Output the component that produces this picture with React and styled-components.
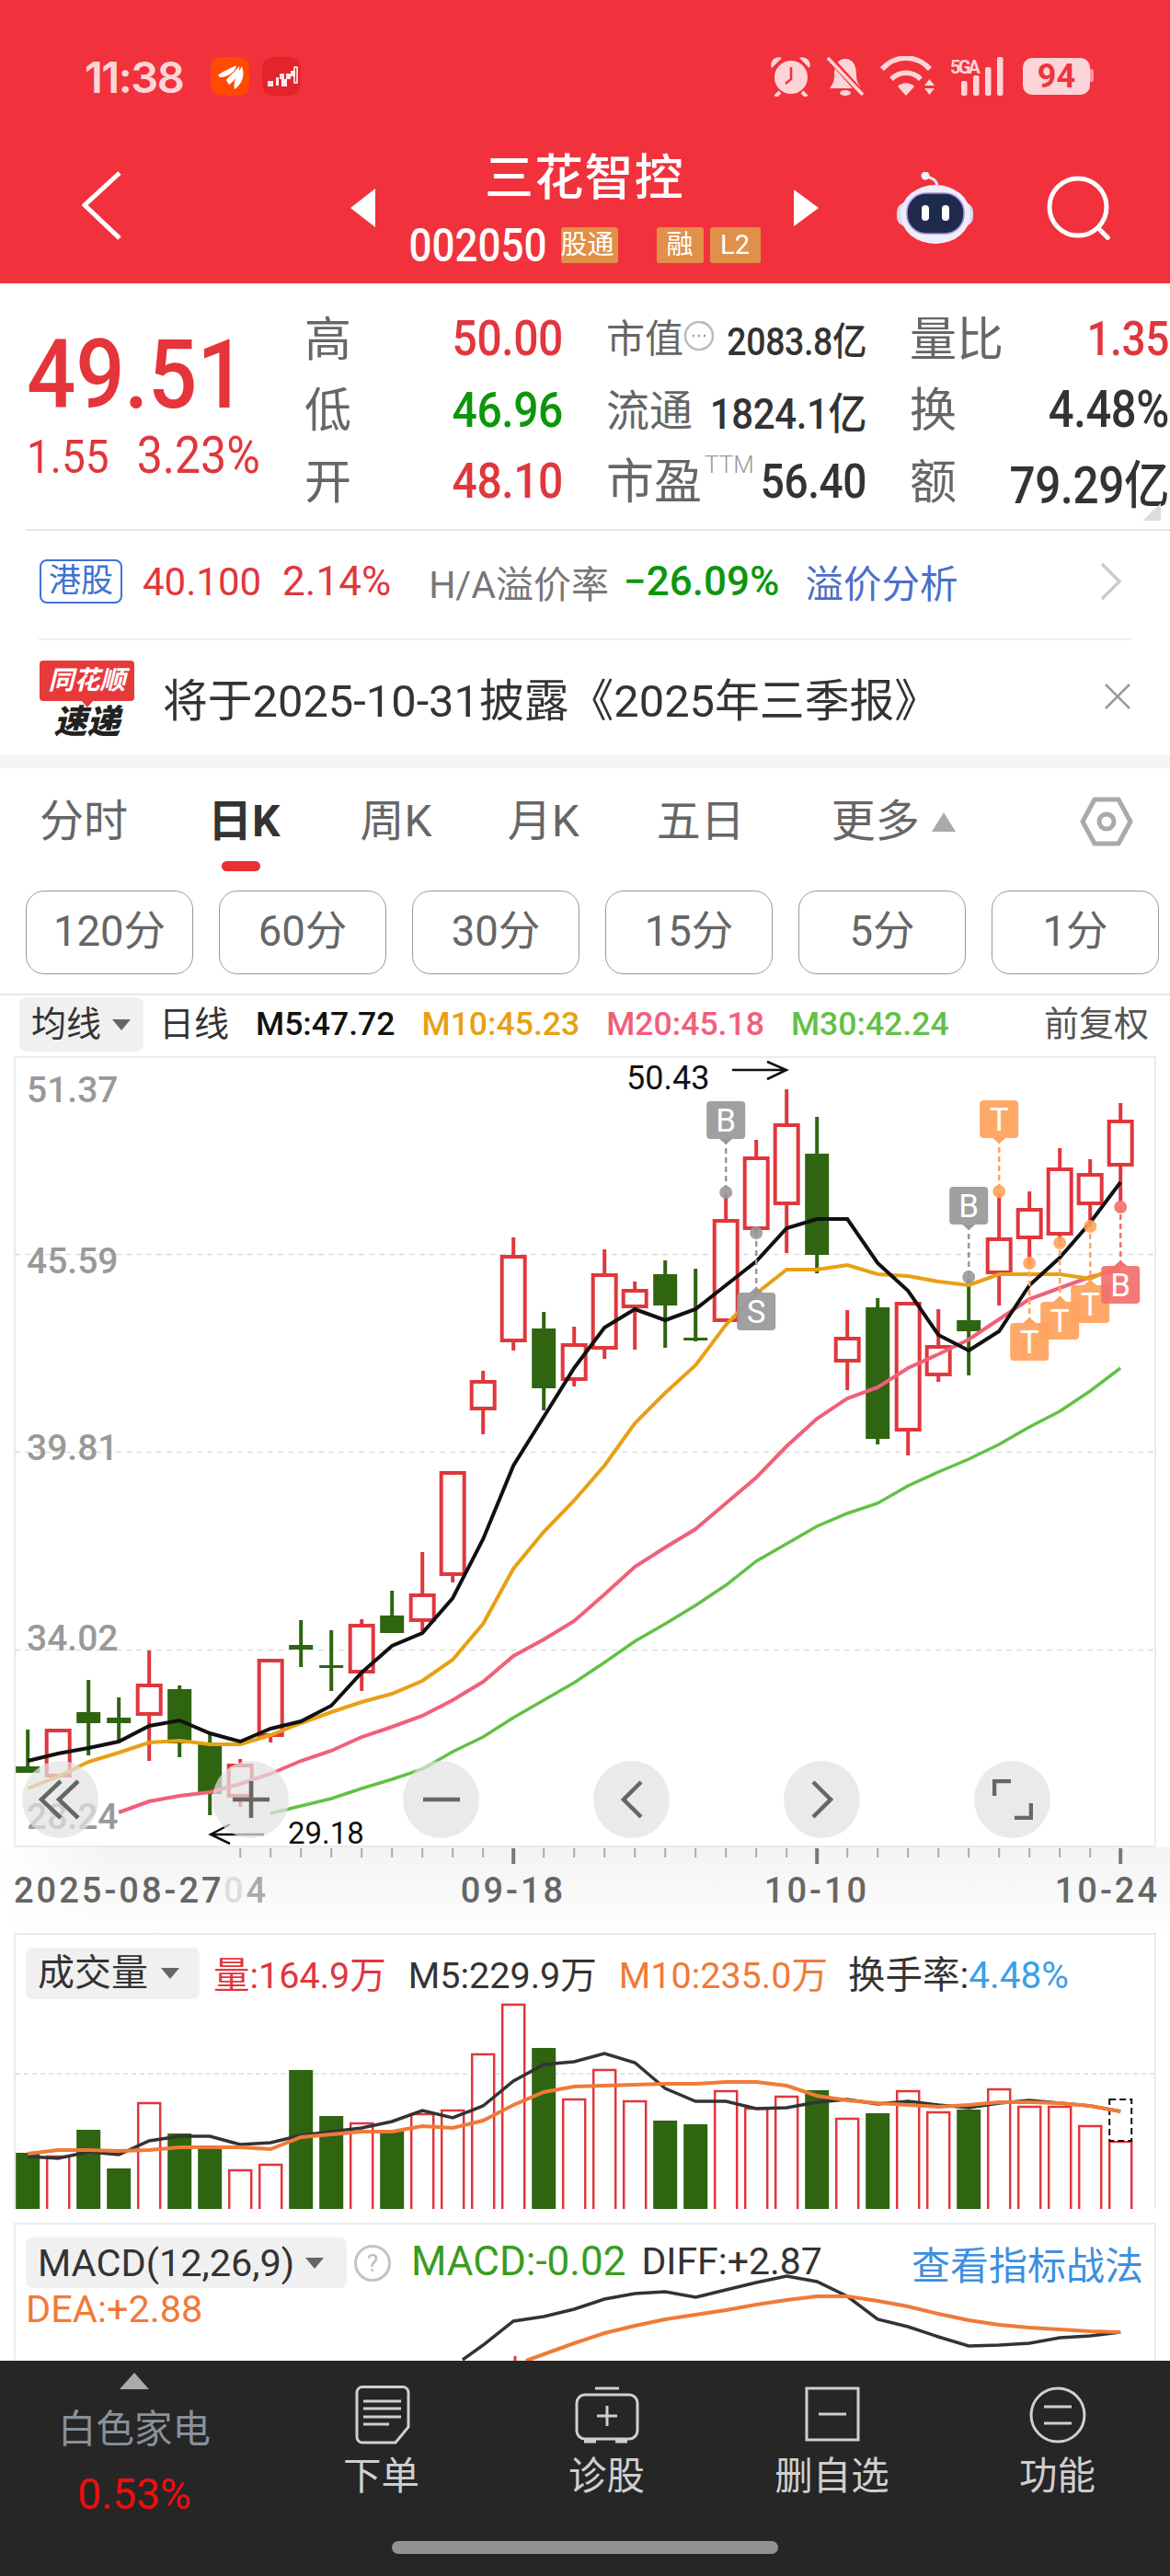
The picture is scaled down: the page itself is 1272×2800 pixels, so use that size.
import styled, { createGlobalStyle } from "styled-components";

const UP = "#e0373d";
const DOWN = "#2f6410";
const FONT = `Roboto, "Noto Sans CJK SC", sans-serif`;

// [kind, wickTop, bodyTop, bodyBottom, wickBottom] in page pixels
const candles = [
  ["g", 1879, 1919, 1926, 1926], ["r", 1878, 1878, 1931, 1931], ["g", 1825, 1860, 1872, 1907],
  ["g", 1844, 1866, 1872, 1892], ["r", 1793, 1829, 1864, 1913], ["g", 1831, 1835, 1894, 1909],
  ["g", 1883, 1895, 1949, 1972], ["r", 1911, 1916, 1953, 1963], ["r", 1802, 1802, 1887, 1893],
  ["g", 1760, 1787, 1792, 1811], ["g", 1771, 1809, 1812, 1837], ["r", 1759, 1764, 1818, 1837],
  ["g", 1728, 1755, 1774, 1774], ["r", 1686, 1731, 1762, 1772], ["r", 1598, 1598, 1712, 1719],
  ["r", 1489, 1499, 1532, 1558], ["r", 1344, 1363, 1458, 1467], ["g", 1425, 1443, 1508, 1532],
  ["r", 1441, 1459, 1500, 1506], ["r", 1357, 1383, 1466, 1476], ["r", 1392, 1400, 1421, 1466],
  ["g", 1369, 1384, 1418, 1464], ["g", 1378, 1453, 1456, 1457], ["r", 1296, 1324, 1436, 1436],
  ["r", 1238, 1256, 1336, 1341], ["r", 1183, 1220, 1309, 1361], ["g", 1213, 1253, 1363, 1383],
  ["r", 1423, 1452, 1480, 1510], ["g", 1410, 1420, 1563, 1569], ["r", 1414, 1414, 1555, 1581],
  ["r", 1422, 1461, 1495, 1501], ["g", 1389, 1434, 1446, 1494], ["r", 1296, 1344, 1384, 1418],
  ["r", 1294, 1312, 1346, 1374], ["r", 1247, 1268, 1342, 1349], ["r", 1259, 1274, 1309, 1333],
  ["r", 1198, 1216, 1267, 1305],
];

const m5 = [1913, 1905, 1899, 1892, 1875, 1869, 1883, 1892, 1878, 1870, 1853, 1817, 1788, 1774, 1736, 1672, 1592, 1539, 1486, 1442, 1422, 1434, 1422, 1396, 1370, 1334, 1324, 1324, 1372, 1402, 1450, 1467, 1446, 1396, 1366, 1328, 1284];
const m10 = [1943, 1930, 1914, 1904, 1893, 1891, 1895, 1895, 1885, 1872, 1860, 1849, 1840, 1826, 1803, 1764, 1704, 1664, 1630, 1592, 1546, 1513, 1483, 1439, 1405, 1379, 1379, 1374, 1384, 1386, 1392, 1396, 1384, 1384, 1384, 1389, 1374];
const m20 = [1969, 1957, 1951, 1947, 1938, 1927, 1913, 1902, 1887, 1876, 1864, 1847, 1827, 1799, 1781, 1761, 1732, 1702, 1681, 1661, 1633, 1605, 1571, 1541, 1519, 1507, 1486, 1471, 1455, 1433, 1411, 1399, 1387, 1379];
const m30 = [1970, 1962, 1954, 1943, 1933, 1922, 1903, 1887, 1866, 1847, 1828, 1806, 1783, 1764, 1744, 1722, 1696, 1677, 1658, 1644, 1633, 1614, 1599, 1585, 1569, 1550, 1533, 1511, 1486];

const volumes = [2335, 2338, 2310, 2352, 2280, 2314, 2330, 2353, 2347, 2245, 2295, 2302, 2310, 2292, 2288, 2227, 2173, 2221, 2276, 2244, 2278, 2300, 2304, 2267, 2286, 2273, 2267, 2297, 2292, 2267, 2290, 2288, 2265, 2284, 2284, 2305, 2322];
const volM5 = [2339, 2341, 2334, 2337, 2322, 2317, 2317, 2326, 2324, 2316, 2312, 2308, 2301, 2289, 2297, 2284, 2257, 2239, 2236, 2227, 2237, 2265, 2279, 2279, 2287, 2286, 2280, 2277, 2282, 2279, 2283, 2286, 2281, 2278, 2281, 2284, 2290];
const volM10 = [2336, 2332, 2332, 2333, 2332, 2329, 2329, 2329, 2331, 2318, 2315, 2312, 2312, 2306, 2308, 2300, 2283, 2269, 2263, 2262, 2261, 2260, 2260, 2258, 2258, 2262, 2273, 2278, 2281, 2283, 2285, 2283, 2280, 2280, 2281, 2284, 2290];
const diff = [2548, 2522, 2517, 2509, 2498, 2492, 2490, 2496, 2488, 2480, 2473, 2479, 2495, 2520, 2528, 2539, 2549, 2548, 2546, 2540, 2538, 2534];
const dea = [2546, 2535, 2527, 2520, 2515, 2510, 2504, 2499, 2495, 2495, 2500, 2506, 2514, 2521, 2526, 2529, 2531, 2533, 2534];

// letter, candle index, box top, dot y, colour
const markers = [
  ["B", 23, 1196, 1295, "#999999"], ["S", 24, 1404, 1339, "#999999"], ["B", 31, 1289, 1387, "#999999"],
  ["T", 32, 1195, 1294, "#ffa35c"], ["T", 33, 1437, 1372, "#ffa35c"], ["T", 34, 1414, 1350, "#ffa35c"],
  ["T", 35, 1396, 1332, "#ffa35c"], ["B", 36, 1375, 1311, "#f36f6f"],
];

const candleX = (i) => 30.2 + 33 * i;
const toPoints = (list, start = 0) => list.map((y, i) => `${candleX(i + start)},${y}`).join(" ");

const GlobalStyle = createGlobalStyle`
  html, body { margin: 0; padding: 0; background: #fff; }
  * { box-sizing: border-box; }
  svg { display: block; }
`;

const Page = styled.div`
  width: 1272px;
  height: 2800px;
  overflow: hidden;
  display: flex;
  flex-direction: column;
  font-family: ${FONT};
  background: #fff;
`;

/* ---------- red top ---------- */
const Top = styled.header`
  height: 308px;
  background: #f1323c;
  color: #fff;
`;
const StatusRow = styled.div`
  height: 166px;
  padding: 0 87px 0 92px;
  display: flex;
  align-items: center;
`;
const Time = styled.span`
  font-family: Inter, Roboto, sans-serif;
  font-size: 47px;
  font-weight: 600;
  letter-spacing: -1.5px;
  color: #fdd5d8;
  margin-right: 30px;
`;
const AppIcon = styled.span`
  width: 42px;
  height: 42px;
  border-radius: 12px;
  background: ${(p) => p.$bg};
  margin-right: 14px;
`;
const StatusIcons = styled.div`
  margin-left: auto;
  display: flex;
  align-items: center;
  gap: 18px;
`;
const Battery = styled.span`
  position: relative;
  width: 73px;
  height: 40px;
  margin-left: 3px;
  border-radius: 10px;
  background: #fdd5d8;
  color: #ee3540;
  font-size: 36px;
  font-weight: 700;
  line-height: 40px;
  text-align: center;
  &::after {
    content: "";
    position: absolute;
    right: -4px;
    top: 12px;
    width: 4px;
    height: 14px;
    border-radius: 0 3px 3px 0;
    background: #f79aa0;
  }
`;
const NavRow = styled.div`
  height: 142px;
  padding-bottom: 24px;
  display: grid;
  grid-template-columns: 381px 27px 455px 27px 1fr;
  align-items: center;
`;
const BackCell = styled.div`
  padding: 0 0 4px 89px;
`;
const Centre = styled.div`
  display: flex;
  flex-direction: column;
  align-items: center;
`;
const Title = styled.div`
  margin-top: 3px;
  font-size: 53px;
  line-height: 50px;
  font-weight: 500;
  letter-spacing: 1.2px;
`;
const CodeRow = styled.div`
  margin-top: 28px;
  height: 39px;
  display: flex;
  align-items: center;
`;
const Code = styled.span`
  font-size: 44px;
  letter-spacing: 0;
  font-weight: 500;
  display: inline-block;
  transform: scaleY(1.14);
  margin-right: 15px;
`;
const Tag = styled.span`
  height: 39px;
  width: ${(p) => p.$w}px;
  margin-left: ${(p) => p.$ml || 0}px;
  background: #e09048;
  border-radius: 3px;
  font-size: 29px;
  line-height: 39px;
  text-align: center;
  overflow: hidden;
  white-space: nowrap;
`;
const ClippedText = styled.span`
  display: block;
  margin-left: -4px;
`;
const NavActions = styled.div`
  padding-left: 85px;
  display: flex;
  align-items: center;
  gap: 79px;
`;

/* ---------- quote ---------- */
const Quote = styled.section`
  height: 267px;
  padding: 21px 0 0 29px;
  display: flex;
  position: relative;
`;
const PriceCol = styled.div`
  width: 302px;
`;
const Price = styled.div`
  margin-top: 28px;
  height: 100px;
  font-size: 94px;
  font-weight: 500;
  line-height: 100px;
  color: #e5343a;
  transform: scaleY(1.11);
  letter-spacing: -0.3px;
`;
const Change = styled.div`
  margin-top: 18px;
  height: 40px;
  display: flex;
  align-items: baseline;
  gap: 30px;
  color: ${UP};
  font-size: 46px;
  line-height: 40px;
  transform: scaleY(1.1);
`;
const ChangePct = styled.span`
  font-size: 50px;
`;
const Stats = styled.div`
  display: grid;
  grid-template-columns: 281px 283px 282px;
  grid-auto-rows: 77.5px;
  column-gap: 47px;
`;
const Stat = styled.div`
  display: flex;
  justify-content: space-between;
  align-items: center;
  white-space: nowrap;
`;
const Label = styled.span`
  display: flex;
  align-items: center;
  margin-bottom: 6px;
  font-size: ${(p) => p.$size || 51}px;
  color: #666;
`;
const Num = styled.span`
  display: inline-block;
  font-size: ${(p) => p.$size || 48}px;
  font-weight: 500;
  color: ${(p) => p.$color || "#333"};
  transform: scaleY(1.12);
  letter-spacing: -0.4px;
`;
const Ttm = styled.span`
  align-self: flex-start;
  margin: 8px 0 0 3px;
  font-size: 26px;
  font-weight: 300;
  color: #999;
`;
const Corner = styled.span`
  position: absolute;
  right: 10px;
  bottom: 9px;
  width: 0;
  height: 0;
  border-left: 20px solid transparent;
  border-bottom: 19px solid #ddd;
`;
const Divider = styled.div`
  height: ${(p) => p.$h || 2}px;
  background: ${(p) => p.$color || "#e6e6e6"};
  margin: 0 ${(p) => p.$right || 0}px 0 ${(p) => p.$left || 0}px;
  flex: none;
`;
const HkRow = styled.div`
  height: 117px;
  padding: 0 52px 7px 43px;
  display: flex;
  align-items: center;
  white-space: nowrap;
`;
const HkTag = styled.span`
  width: 90px;
  height: 48px;
  border: 2px solid #3f72d4;
  border-radius: 8px;
  color: #3f72d4;
  font-size: 35px;
  line-height: 43px;
  text-align: center;
`;
const HkText = styled.span`
  font-size: ${(p) => p.$size}px;
  font-weight: ${(p) => p.$weight || 400};
  color: ${(p) => p.$color};
  margin-left: ${(p) => p.$ml}px;
`;
const PushRight = styled.span`
  margin-left: auto;
`;
const NewsRow = styled.div`
  height: 125px;
  padding: 0 42px 3px 43px;
  display: flex;
  align-items: center;
`;
const Logo = styled.div`
  width: 103px;
  margin: 5px 31px 0 0;
  display: flex;
  flex-direction: column;
  align-items: center;
`;
const LogoTop = styled.div`
  position: relative;
  width: 103px;
  height: 44px;
  border-radius: 4px;
  background: #e63a3a;
  color: #fff;
  font-size: 28px;
  font-weight: 700;
  font-style: italic;
  line-height: 44px;
  text-align: center;
  &::after {
    content: "";
    position: absolute;
    left: 46px;
    top: 44px;
    border-left: 6px solid transparent;
    border-right: 6px solid transparent;
    border-top: 7px solid #e63a3a;
  }
`;
const LogoBottom = styled.div`
  margin-top: 7px;
  color: #222;
  font-size: 36px;
  font-weight: 900;
  font-style: italic;
  line-height: 32px;
`;
const NewsText = styled.span`
  font-size: 48.8px;
  color: #333;
  white-space: nowrap;
`;
const Band = styled.div`
  height: 14px;
  flex: none;
  background: #f5f5f5;
`;

/* ---------- tabs ---------- */
const Tabs = styled.nav`
  height: 116px;
  padding: 0 40px 0 43px;
  display: flex;
  align-items: center;
  white-space: nowrap;
`;
const Tab = styled.span`
  position: relative;
  margin-left: ${(p) => p.$ml || 0}px;
  font-size: 48px;
  line-height: 58px;
  font-weight: ${(p) => (p.$active ? 700 : 400)};
  color: ${(p) => (p.$active ? "#333" : "#666")};
  display: flex;
  align-items: center;
  ${(p) =>
    p.$active &&
    `&::after {
      content: "";
      position: absolute;
      left: 15px;
      top: 72px;
      width: 42px;
      height: 11px;
      border-radius: 6px;
      background: #e83035;
    }`}
`;
const TabCaret = styled.span`
  margin-left: 13px;
  width: 0;
  height: 0;
  border-left: 13px solid transparent;
  border-right: 13px solid transparent;
  border-bottom: 21px solid #aaa;
`;
const Periods = styled.div`
  padding: 17px 12px 21px 28px;
  display: flex;
  gap: 28px;
`;
const Period = styled.span`
  width: 182px;
  height: 91px;
  border: 1.5px solid #999;
  border-radius: 20px;
  font-size: 45.5px;
  line-height: 88px;
  text-align: center;
  color: #666;
`;

/* ---------- MA legend ---------- */
const MaRow = styled.div`
  height: 66px;
  padding: 0 23px 3px 21px;
  display: flex;
  align-items: center;
  white-space: nowrap;
`;
const Picker = styled.span`
  height: ${(p) => p.$h || 59}px;
  width: ${(p) => p.$w}px;
  flex: none;
  border-radius: 8px;
  background: #f0f0f0;
  padding-left: 13px;
  display: flex;
  align-items: center;
  font-size: ${(p) => p.$size || 38}px;
  line-height: 1.2;
  color: #333;
`;
const PickerCaret = styled.span`
  margin-left: ${(p) => p.$ml || 12}px;
  width: 0;
  height: 0;
  border-left: 10px solid transparent;
  border-right: 10px solid transparent;
  border-top: 12px solid #666;
`;
const Legend = styled.span`
  font-size: ${(p) => p.$size || 35.6}px;
  font-weight: ${(p) => p.$weight || 500};
  line-height: 1.3;
  color: ${(p) => p.$color};
  margin-left: ${(p) => p.$ml}px;
`;

/* ---------- charts ---------- */
const ChartFrame = styled.div`
  position: relative;
  flex: none;
  width: 1242px;
  height: 860px;
  margin-left: 15px;
`;
const Controls = styled.div`
  position: absolute;
  left: 9px;
  bottom: 10px;
  display: flex;
  gap: 124px;
`;
const ControlButton = styled.span`
  width: 83px;
  height: 84px;
  border-radius: 50%;
  background: rgba(226, 226, 226, 0.72);
  display: flex;
  align-items: center;
  justify-content: center;
`;
const AxisStrip = styled.div`
  height: 93px;
  flex: none;
  background: linear-gradient(90deg, #fff 0, rgba(255, 255, 255, 0) 120px), linear-gradient(#f3f3f3, #fefefe);
`;
const Panel = styled.section`
  position: relative;
  flex: none;
  width: 1242px;
  height: ${(p) => p.$h}px;
  margin: 0 0 ${(p) => p.$mb || 0}px 15px;
  border: 2px solid #ebebeb;
  border-bottom: 0;
  overflow: hidden;
`;
const PanelHeader = styled.div`
  position: relative;
  margin: 11px 12px 0 11px;
  display: flex;
  align-items: center;
  white-space: nowrap;
`;
const PanelText = styled.span`
  margin-bottom: 3px;
  font-size: ${(p) => p.$size || 39.5}px;
  color: ${(p) => p.$color};
  margin-left: ${(p) => p.$ml}px;
`;
const Dea = styled.div`
  position: relative;
  margin: 0 0 0 11px;
  font-size: 41.5px;
  line-height: 40px;
  color: #f07a38;
`;
const PanelBackground = styled.svg`
  position: absolute;
  left: 0;
  top: 0;
`;
const QuestionMark = styled.span`
  width: 40px;
  height: 40px;
  margin-left: 8px;
  flex: none;
  border: 3px solid #c4c4c4;
  border-radius: 50%;
  color: #bbb;
  font-size: 26px;
  line-height: 34px;
  text-align: center;
`;

/* ---------- footer ---------- */
const Footer = styled.footer`
  flex: 1;
  background: #262626;
  display: flex;
  flex-direction: column;
`;
const FooterRow = styled.div`
  height: 196px;
  display: grid;
  grid-template-columns: 292px repeat(4, 245px);
`;
const Sector = styled.div`
  padding-top: 13px;
  display: flex;
  flex-direction: column;
  align-items: center;
`;
const SectorCaret = styled.span`
  width: 0;
  height: 0;
  border-left: 16px solid transparent;
  border-right: 16px solid transparent;
  border-bottom: 18px solid #aaa;
`;
const SectorName = styled.span`
  margin-top: 19px;
  font-size: 41.5px;
  line-height: 50px;
  color: #8a9099;
`;
const SectorChange = styled.span`
  margin-top: 20px;
  font-size: 46px;
  line-height: 50px;
  color: #f00d0d;
`;
const Action = styled.div`
  padding-top: 27px;
  display: flex;
  flex-direction: column;
  align-items: center;
  color: #cfcfcf;
`;
const ActionIcon = styled.svg`
  height: 64px;
  width: 70px;
`;
const ActionLabel = styled.span`
  margin-top: 10px;
  font-size: 41.5px;
  line-height: 50px;
`;
const HomeBar = styled.div`
  width: 420px;
  height: 14px;
  align-self: center;
  border-radius: 7px;
  background: #919191;
`;

const Marker = ({ letter, index, top, dot, color }) => {
  const x = candleX(index);
  const below = dot < top;
  const edge = below ? top : top + 41;
  const tail = below ? top - 6 : top + 47;
  return (
    <g>
      <line x1={x} x2={x} y1={edge} y2={dot} stroke={color} strokeWidth="2.5" strokeDasharray="6 4" />
      <circle cx={x} cy={dot} r="7" fill={color} opacity="0.9" />
      <rect x={x - 21} y={top} width="42" height="41" rx="4" fill={color} opacity="0.93" />
      <polygon points={`${x - 7},${edge} ${x + 7},${edge} ${x},${tail}`} fill={color} />
      <text x={x} y={top + 33} textAnchor="middle" fontSize="35" fontFamily="Roboto, sans-serif" fill="#fff">
        {letter}
      </text>
    </g>
  );
};

function CandleChart() {
  return (
    <svg width="1242" height="860" viewBox="15 1147 1242 860">
      <rect x="16" y="1148" width="1240" height="858" fill="none" stroke="#ebebeb" strokeWidth="2" />
      {[1362.5, 1577.5, 1792.5].map((y) => (
        <line key={y} x1="16" x2="1256" y1={y} y2={y} stroke="#ddd" strokeWidth="1.5" strokeDasharray="6 5" />
      ))}
      {[["51.37", 1197], ["45.59", 1383], ["39.81", 1586], ["34.02", 1793], ["28.24", 1987]].map(([t, y]) => (
        <text key={t} x="29" y={y} fontSize="39" fontWeight="500" fontFamily="Roboto, sans-serif" fill="#999">
          {t}
        </text>
      ))}
      {candles.map(([kind, wickTop, bodyTop, bodyBottom, wickBottom], i) => {
        const x = candleX(i);
        const color = kind === "r" ? UP : DOWN;
        return (
          <g key={i}>
            <line x1={x} x2={x} y1={wickTop} y2={wickBottom} stroke={color} strokeWidth="4" />
            {kind === "r" ? (
              <rect x={x - 12.5} y={bodyTop + 2} width="25" height={bodyBottom - bodyTop - 4} fill="#fff" stroke={color} strokeWidth="4" />
            ) : (
              <rect x={x - 13} y={bodyTop} width="26" height={bodyBottom - bodyTop} fill={color} />
            )}
          </g>
        );
      })}
      <polyline points={toPoints(m30, 8)} fill="none" stroke="#62c146" strokeWidth="3.5" />
      <polyline points={toPoints(m20, 3)} fill="none" stroke="#f0607a" strokeWidth="4" />
      <polyline points={toPoints(m10)} fill="none" stroke="#e8a013" strokeWidth="4" />
      <polyline points={toPoints(m5)} fill="none" stroke="#111" strokeWidth="4" />
      {markers.map(([letter, index, top, dot, color]) => (
        <Marker key={index} letter={letter} index={index} top={top} dot={dot} color={color} />
      ))}
      <text x="681" y="1183" fontSize="36" fontFamily="Roboto, sans-serif" fill="#111">50.43</text>
      <path d="M796 1162H855M834 1153L855 1162L834 1172" fill="none" stroke="#111" strokeWidth="2.5" />
      <text x="313" y="2003" fontSize="33" fontFamily="Roboto, sans-serif" fill="#111">29.18</text>
      <path d="M287 1993H229M250 1982L229 1993L250 2003" fill="none" stroke="#111" strokeWidth="2.5" />
    </svg>
  );
}

function AxisTicks() {
  const text = { fontSize: 38, fontWeight: 500, fontFamily: "Roboto, sans-serif", letterSpacing: 3 };
  return (
    <svg width="1272" height="93" viewBox="0 2007 1272 93">
      {candles.map((_, i) => {
        if (i < 7) return null;
        const major = i === 16 || i === 26 || i === 36;
        const x = candleX(i);
        return <line key={i} x1={x} x2={x} y1="2008" y2={major ? 2025 : 2018} stroke={major ? "#777" : "#aaa"} strokeWidth={major ? 4 : 2} />;
      })}
      <text x="15" y="2067" fill="#666" {...text}>2025-08-27</text>
      <text x="243" y="2067" fill="#ddd" {...text}>0<tspan fill="#aaa">4</tspan></text>
      <text x="558" y="2067" textAnchor="middle" fill="#666" {...text}>09-18</text>
      <text x="888" y="2067" textAnchor="middle" fill="#666" {...text}>10-10</text>
      <text x="1261" y="2067" textAnchor="end" fill="#666" {...text}>10-24</text>
    </svg>
  );
}

function VolumeChart() {
  return (
    <svg width="1238" height="229" viewBox="17 2171 1238 229">
      <line x1="17" x2="1255" y1="2249" y2="2249" stroke="#ddd" strokeWidth="1.5" strokeDasharray="5 4" />
      {volumes.map((top, i) => {
        const x = candleX(i);
        return candles[i][0] === "r" ? (
          <rect key={i} x={x - 12} y={top + 1} width="24" height={2398 - top} fill="#fff" stroke={UP} strokeWidth="2.5" />
        ) : (
          <rect key={i} x={x - 13} y={top} width="26" height={2400 - top} fill={DOWN} />
        );
      })}
      <rect x={candleX(36) - 12} y="2277" width="24" height="45" fill="#fff" stroke="#111" strokeWidth="2" strokeDasharray="7 4" />
      <polyline points={toPoints(volM5)} fill="none" stroke="#333" strokeWidth="3.5" />
      <polyline points={toPoints(volM10)} fill="none" stroke="#f07a38" strokeWidth="4" />
    </svg>
  );
}

function MacdLines() {
  return (
    <PanelBackground width="1238" height="148" viewBox="17 2417 1238 148">
      <line x1="560" x2="560" y1="2560" y2="2565" stroke={UP} strokeWidth="3" />
      <polyline points={`503,2564 ${toPoints(diff, 15)}`} fill="none" stroke="#333" strokeWidth="3.5" />
      <polyline points={`572,2565 ${toPoints(dea, 18)}`} fill="none" stroke="#f07a38" strokeWidth="4" />
    </PanelBackground>
  );
}

const Robot = () => (
  <svg width="83" height="78" viewBox="975 183 83 78">
    <path d="M1019 199C1019 192 1014 190 1008 188" fill="none" stroke="#e3e4f5" strokeWidth="3" />
    <circle cx="1006" cy="187" r="4.5" fill="#eef0fa" />
    <rect x="975" y="216" width="83" height="26" rx="10" fill="#d9d9f0" />
    <ellipse cx="1017" cy="229" rx="38" ry="32" fill="#eeeefa" />
    <rect x="986" y="206" width="62" height="44" rx="21" fill="#1f2b4c" stroke="#a78be0" strokeWidth="1.5" />
    <rect x="1002" y="219" width="8" height="17" rx="4" fill="#fff" />
    <rect x="1024" y="219" width="8" height="17" rx="4" fill="#fff" />
  </svg>
);

export default function App() {
  return (
    <Page>
      <GlobalStyle />
      <Top>
        <StatusRow>
          <Time>11:38</Time>
          <AppIcon $bg="#ff4a00">
            <svg width="42" height="42" viewBox="0 0 42 42">
              <path d="M8 20C15 14 23 12 28 9C27 15 21 21 10 22ZM17 25C22 19 27 15 31 10C32 16 29 23 20 30ZM26 35C24 28 28 20 34 10C37 18 36 28 26 35Z" fill="#fff" />
            </svg>
          </AppIcon>
          <AppIcon $bg="#e3242b">
            <svg width="42" height="42" viewBox="0 0 42 42">
              <path d="M6 26h6v6H6zM15 22h3v9h-3zM19 18h5v6h-5zM21 24h6v8h-6zM26 18h5v6h-5zM31 15h5v6h-5z" fill="#fff" opacity="0.9" />
              <rect x="35" y="11" width="3" height="17" fill="none" stroke="#fff" strokeWidth="1.5" />
            </svg>
          </AppIcon>
          <StatusIcons>
            <svg width="43" height="44" viewBox="838 60 43 44" fill="#fdd5d8">
              <path d="M839 73C836 66 843 59 850 62ZM880 73C883 66 876 59 869 62Z" />
              <circle cx="860" cy="83" r="18" />
              <path d="M848 99L843 104M872 99L877 104" stroke="#fdd5d8" strokeWidth="4" />
              <path d="M860 72V85L854 90" fill="none" stroke="#f1323c" strokeWidth="2.5" />
            </svg>
            <svg width="40" height="44" viewBox="900 60 40 44" fill="#fdd5d8">
              <path d="M920 63C929 63 932 71 932 81C932 88 935 91 937 95H903C906 91 908 88 908 81C908 71 911 63 920 63Z" />
              <ellipse cx="920" cy="100" rx="6" ry="3" />
              <line x1="901" y1="60" x2="939" y2="102" stroke="#f1323c" strokeWidth="7" />
              <line x1="901" y1="62" x2="939" y2="102" stroke="#fdd5d8" strokeWidth="3.5" />
            </svg>
            <svg width="59" height="44" viewBox="958 60 59 44" fill="none" stroke="#fdd5d8">
              <path d="M960 74C975 58 997 58 1012 74M970 85C979 76 993 76 1002 85" strokeWidth="5.5" />
              <path d="M977 93C982 88 990 88 995 93L986 103Z" fill="#fdd5d8" strokeWidth="0" />
              <path d="M1006 92H1017L1011.5 85ZM1006 95H1017L1011.5 102Z" fill="#fdd5d8" strokeWidth="0" />
            </svg>
            <svg width="57" height="44" viewBox="1033 60 57 44" fill="#fdd5d8">
              <text x="1032" y="79" fontSize="20" fontWeight="700" fontFamily="Roboto, sans-serif" textLength="33">5GA</text>
              <rect x="1044" y="87" width="6.5" height="16" rx="2" />
              <rect x="1057" y="81" width="6.5" height="22" rx="2" />
              <rect x="1070" y="72" width="6.5" height="31" rx="2" />
              <rect x="1083" y="61" width="6.5" height="42" rx="2" />
            </svg>
            <Battery>94</Battery>
          </StatusIcons>
        </StatusRow>
        <NavRow>
          <BackCell>
            <svg width="46" height="78" viewBox="89 184 46 78">
              <path d="M130 187L92 222L130 258" fill="none" stroke="#fff" strokeWidth="5" />
            </svg>
          </BackCell>
          <svg width="27" height="42" viewBox="0 0 27 42"><polygon points="0,21 27,0 27,42" fill="#fff" /></svg>
          <Centre>
            <Title>三花智控</Title>
            <CodeRow>
              <Code>002050</Code>
              <Tag $w={62}><ClippedText>股通</ClippedText></Tag>
              <Tag $w={51} $ml={42}>融</Tag>
              <Tag $w={55} $ml={7}>L2</Tag>
            </CodeRow>
          </Centre>
          <svg width="27" height="40" viewBox="0 0 27 40"><polygon points="0,0 27,20 0,40" fill="#fff" /></svg>
          <NavActions>
            <Robot />
            <svg width="70" height="70" viewBox="1137 189 70 70" fill="none" stroke="#fff" strokeWidth="5">
              <circle cx="1172" cy="223" r="31" />
              <path d="M1194 246L1206 258" />
            </svg>
          </NavActions>
        </NavRow>
      </Top>

      <Quote>
        <PriceCol>
          <Price>49.51</Price>
          <Change>
            <span>1.55</span>
            <ChangePct>3.23%</ChangePct>
          </Change>
        </PriceCol>
        <Stats>
          <Stat><Label>高</Label><Num $color={UP}>50.00</Num></Stat>
          <Stat>
            <Label $size={42}>
              市值
              <svg width="34" height="34" viewBox="0 0 34 34" fill="none">
                <circle cx="17" cy="17" r="15" stroke="#bbb" strokeWidth="2.5" />
                <path d="M10 17h2M16 17h2M22 17h2" stroke="#999" strokeWidth="2.5" />
              </svg>
            </Label>
            <Num $size={37.5}>2083.8亿</Num>
          </Stat>
          <Stat><Label>量比</Label><Num $color={UP} $size={46}>1.35</Num></Stat>
          <Stat><Label>低</Label><Num $color="#0d960d">46.96</Num></Stat>
          <Stat><Label $size={47}>流通</Label><Num $size={42}>1824.1亿</Num></Stat>
          <Stat><Label>换</Label><Num $size={49}>4.48%</Num></Stat>
          <Stat><Label>开</Label><Num $color={UP}>48.10</Num></Stat>
          <Stat><Label $size={52}>市盈<Ttm>TTM</Ttm></Label><Num $size={46}>56.40</Num></Stat>
          <Stat><Label>额</Label><Num $size={49.5}>79.29亿</Num></Stat>
        </Stats>
        <Corner />
      </Quote>
      <Divider $left={28} />
      <HkRow>
        <HkTag>港股</HkTag>
        <HkText $size={42} $color={UP} $ml={22}>40.100</HkText>
        <HkText $size={44} $color={UP} $ml={23}>2.14%</HkText>
        <HkText $size={41} $color="#777" $ml={41}>H/A溢价率</HkText>
        <HkText $size={44} $weight={500} $color="#0d960d" $ml={16}>−26.09%</HkText>
        <HkText $size={41.5} $color="#4a6fc8" $ml={28}>溢价分析</HkText>
        <PushRight>
          <svg width="24" height="42" viewBox="0 0 24 42">
            <path d="M2 2L21 21L2 40" fill="none" stroke="#ccc" strokeWidth="3.5" />
          </svg>
        </PushRight>
      </HkRow>
      <Divider $left={42} $right={43} $color="#eeeeee" />
      <NewsRow>
        <Logo>
          <LogoTop>同花顺</LogoTop>
          <LogoBottom>速递</LogoBottom>
        </Logo>
        <NewsText>将于2025-10-31披露《2025年三季报》</NewsText>
        <PushRight>
          <svg width="30" height="28" viewBox="0 0 30 28">
            <path d="M2 1L28 27M28 1L2 27" fill="none" stroke="#999" strokeWidth="2.5" />
          </svg>
        </PushRight>
      </NewsRow>
      <Band />

      <Tabs>
        <Tab>分时</Tab>
        <Tab $active $ml={87}>日K</Tab>
        <Tab $ml={87}>周K</Tab>
        <Tab $ml={82}>月K</Tab>
        <Tab $ml={84}>五日</Tab>
        <Tab $ml={94}>更多<TabCaret /></Tab>
        <PushRight>
          <svg width="58" height="54" viewBox="0 0 58 54" fill="none" stroke="#aaa" strokeWidth="5">
            <polygon points="16,3 42,3 55,27 42,51 16,51 3,27" strokeLinejoin="round" />
            <circle cx="29" cy="27" r="8" />
          </svg>
        </PushRight>
      </Tabs>
      <Periods>
        {["120分", "60分", "30分", "15分", "5分", "1分"].map((t) => (
          <Period key={t}>{t}</Period>
        ))}
      </Periods>
      <Divider />
      <MaRow>
        <Picker $w={135}>均线<PickerCaret /></Picker>
        <Legend $size={38} $weight={400} $color="#333" $ml={17}>日线</Legend>
        <Legend $color="#111" $ml={29}>M5:47.72</Legend>
        <Legend $color="#e8a013" $ml={29}>M10:45.23</Legend>
        <Legend $color="#f0607a" $ml={29}>M20:45.18</Legend>
        <Legend $color="#62c146" $ml={29}>M30:42.24</Legend>
        <PushRight>
          <Legend $size={38} $weight={400} $color="#555" $ml={0}>前复权</Legend>
        </PushRight>
      </MaRow>

      <ChartFrame>
        <CandleChart />
        <Controls>
          <ControlButton>
            <svg width="50" height="50" viewBox="0 0 50 50" fill="none" stroke="#666" strokeWidth="4.5">
              <path d="M25 5L4 25L25 45M44 5L23 25L44 45" />
            </svg>
          </ControlButton>
          <ControlButton>
            <svg width="40" height="40" viewBox="0 0 40 40" stroke="#666" strokeWidth="4.5"><path d="M0 20H40M20 0V40" /></svg>
          </ControlButton>
          <ControlButton>
            <svg width="40" height="6" viewBox="0 0 40 6" stroke="#666" strokeWidth="4.5"><path d="M0 3H40" /></svg>
          </ControlButton>
          <ControlButton>
            <svg width="24" height="42" viewBox="0 0 24 42" fill="none" stroke="#666" strokeWidth="4.5"><path d="M22 2L3 21L22 40" /></svg>
          </ControlButton>
          <ControlButton>
            <svg width="24" height="42" viewBox="0 0 24 42" fill="none" stroke="#666" strokeWidth="4.5"><path d="M2 2L21 21L2 40" /></svg>
          </ControlButton>
          <ControlButton>
            <svg width="44" height="44" viewBox="0 0 44 44" fill="none" stroke="#666" strokeWidth="4.5"><path d="M2 18V2H20M42 26V42H24" /></svg>
          </ControlButton>
        </Controls>
      </ChartFrame>
      <AxisStrip>
        <AxisTicks />
      </AxisStrip>

      <Panel $h={300} $mb={15}>
        <PanelHeader>
          <Picker $w={189} $h={56} $size={40}>成交量<PickerCaret $ml={14} /></Picker>
          <PanelText $color={UP} $ml={15}>量:164.9万</PanelText>
          <PanelText $color="#333" $ml={24}>M5:229.9万</PanelText>
          <PanelText $color="#f07a38" $ml={24}>M10:235.0万</PanelText>
          <PanelText $size={40.5} $color="#333" $ml={22}>换手率:<PanelText $size={40.5} $color="#3aa0ea" $ml={0}>4.48%</PanelText></PanelText>
        </PanelHeader>
        <VolumeChart />
      </Panel>

      <Panel $h={150}>
        <MacdLines />
        <PanelHeader>
          <Picker $w={349} $h={55} $size={41.5}>MACD(12,26,9)<PickerCaret /></Picker>
          <QuestionMark>?</QuestionMark>
          <PanelText $size={44} $color="#3a9c1e" $ml={22}>MACD:-0.02</PanelText>
          <PanelText $size={41} $color="#333" $ml={17}>DIFF:+2.87</PanelText>
          <PushRight>
            <PanelText $size={42} $color="#3f8fe0" $ml={0}>查看指标战法</PanelText>
          </PushRight>
        </PanelHeader>
        <Dea>DEA:+2.88</Dea>
      </Panel>

      <Footer>
        <FooterRow>
          <Sector>
            <SectorCaret />
            <SectorName>白色家电</SectorName>
            <SectorChange>0.53%</SectorChange>
          </Sector>
          <Action>
            <ActionIcon viewBox="0 0 70 64" fill="none" stroke="#cfcfcf" strokeWidth="3">
              <path d="M14 1.5H58a6 6 0 0 1 6 6V45L50 62H14a6 6 0 0 1-6-6V7.5a6 6 0 0 1 6-6Z" />
              <path d="M15 17H56M15 25H56M15 34H56M15 42H43" />
            </ActionIcon>
            <ActionLabel>下单</ActionLabel>
          </Action>
          <Action>
            <ActionIcon viewBox="0 0 70 64" fill="none" stroke="#cfcfcf" strokeWidth="3">
              <path d="M22 3H48" />
              <rect x="2" y="10" width="66" height="48" rx="9" />
              <path d="M35 22V44M24 33H46" />
              <path d="M10 60H23M44 60H57" strokeWidth="5" />
            </ActionIcon>
            <ActionLabel>诊股</ActionLabel>
          </Action>
          <Action>
            <ActionIcon viewBox="0 0 70 64" fill="none" stroke="#cfcfcf" strokeWidth="3">
              <rect x="7" y="3" width="56" height="56" />
              <path d="M20 31H50" />
            </ActionIcon>
            <ActionLabel>删自选</ActionLabel>
          </Action>
          <Action>
            <ActionIcon viewBox="0 0 70 64" fill="none" stroke="#cfcfcf" strokeWidth="3">
              <circle cx="35" cy="32" r="29" />
              <path d="M20 23H50M20 41H50" />
            </ActionIcon>
            <ActionLabel>功能</ActionLabel>
          </Action>
        </FooterRow>
        <HomeBar />
      </Footer>
    </Page>
  );
}
